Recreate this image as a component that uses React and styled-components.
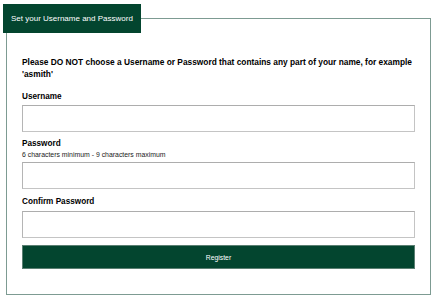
import React from 'react'
import styled, { createGlobalStyle } from 'styled-components'

const GlobalStyle = createGlobalStyle`
  html, body {
    margin: 0;
    padding: 0;
    background: #ffffff;
    font-family: "Liberation Sans", Arial, sans-serif;
  }
`

const Page = styled.div`
  padding: 4px 5px 0 6px;
`

const Fieldset = styled.fieldset`
  margin: 0;
  padding: 0 15px 25px 15px;
  border: 1px solid #7d9b92;
  min-width: 0;
`

const Legend = styled.legend`
  margin-left: -19px;
  padding: 0 8px;
  height: 29px;
  line-height: 29px;
  background: #03452f;
  color: #ffffff;
  font-size: 8px;
  white-space: nowrap;
  box-sizing: border-box;
  width: 138px;
`

const Notice = styled.p`
  margin: 23px 0 0;
  font-size: 8.35px;
  line-height: 12px;
  font-weight: bold;
  color: #000;
`

const Field = styled.div`
  display: flex;
  flex-direction: column;
  margin-top: ${p => p.$gap}px;
`

const Label = styled.label`
  font-size: 8.2px;
  line-height: 12px;
  font-weight: bold;
  color: #000;
`

const Hint = styled.span`
  font-size: 6.9px;
  line-height: 10px;
  color: #222;
`

const Input = styled.input`
  box-sizing: border-box;
  height: 27px;
  width: 100%;
  margin-top: ${p => p.$gap}px;
  border: 1px solid #c4c4c4;
  border-top-color: #adadad;
  border-left-color: #b5b5b5;
  background: #fff;
  outline: none;
`

const Button = styled.button`
  display: block;
  box-sizing: border-box;
  width: 100%;
  height: 24px;
  margin-top: 7px;
  border: 1px solid #5a7f72;
  background: #03452f;
  color: #ffffff;
  font-family: "Liberation Sans", Arial, sans-serif;
  font-size: 6.8px;
  cursor: pointer;
`

export default function App() {
  return (
    <>
      <GlobalStyle />
      <Page>
        <Fieldset>
          <Legend>Set your Username and Password</Legend>
          <Notice>
            Please DO NOT choose a Username or Password that contains any part of your name, for example 'asmith'
          </Notice>
          <Field $gap={11}>
            <Label>Username</Label>
            <Input type="text" $gap={2} />
          </Field>
          <Field $gap={6}>
            <Label>Password</Label>
            <Hint>6 characters minimum - 9 characters maximum</Hint>
            <Input type="password" $gap={2} />
          </Field>
          <Field $gap={7}>
            <Label>Confirm Password</Label>
            <Input type="password" $gap={3} />
          </Field>
          <Button>Register</Button>
        </Fieldset>
      </Page>
    </>
  )
}
